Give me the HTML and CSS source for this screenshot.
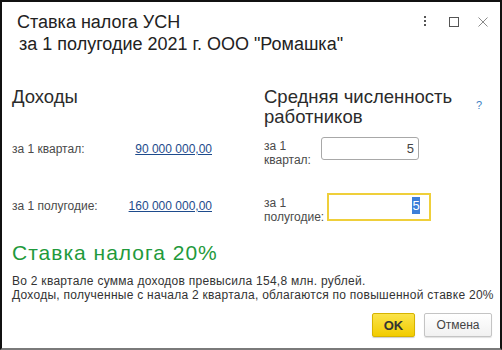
FILE: index.html
```html
<!DOCTYPE html>
<html lang="ru">
<head>
<meta charset="utf-8">
<title>Ставка налога УСН</title>
<link rel="stylesheet" href="styles.css">
</head>
<body>
<div class="window">
  <div class="header">
    <div class="title">
      <div class="title-line">Ставка налога УСН</div>
      <div class="title-line second">за 1 полугодие 2021 г. ООО "Ромашка"</div>
    </div>
    <svg class="win-icons" width="70" height="14" viewBox="0 0 70 14" aria-hidden="true">
      <rect x="4" y="2" width="2" height="2" fill="#555"/>
      <rect x="4" y="6" width="2" height="2" fill="#555"/>
      <rect x="4" y="10" width="2" height="2" fill="#555"/>
      <rect x="29.5" y="3.5" width="9" height="9" fill="none" stroke="#555" stroke-width="1"/>
      <path d="M58.5 3.5 L67.5 12.5 M67.5 3.5 L58.5 12.5" stroke="#8a8a8a" stroke-width="1" fill="none"/>
    </svg>
  </div>

  <div class="main">
    <div class="heading">Доходы</div>
    <div class="heading-right">
      <div class="heading">Средняя численность<br>работников</div>
      <span class="help">?</span>
    </div>

    <div class="income-row first">
      <span class="label">за 1 квартал:</span>
      <a class="link" href="#">90 000 000,00</a>
    </div>
    <div class="staff-row first">
      <span class="label two-line">за 1<br>квартал:</span>
      <div class="field">5</div>
    </div>

    <div class="income-row second">
      <span class="label">за 1 полугодие:</span>
      <a class="link" href="#">160 000 000,00</a>
    </div>
    <div class="staff-row second">
      <span class="label two-line">за 1<br>полугодие:</span>
      <div class="field focused"><span class="sel">5</span></div>
    </div>
  </div>

  <div class="rate">Ставка налога 20%</div>
  <div class="note">
    <div>Во 2 квартале сумма доходов превысила 154,8 млн. рублей.</div>
    <div>Доходы, полученные с начала 2 квартала, облагаются по повышенной ставке 20%</div>
  </div>

  <div class="buttons">
    <button class="btn ok">OK</button>
    <button class="btn cancel">Отмена</button>
  </div>
</div>
</body>
</html>
```
FILE: styles.css
```css
* { box-sizing: border-box; }
html, body { margin: 0; padding: 0; background: #fff; }
body { font-family: "Liberation Sans", Arial, sans-serif; color: #333; }

.window {
  width: 502px;
  height: 350px;
  border: 2px solid #111;
  border-bottom-color: #7a7a7a;
  background: #fff;
  overflow: hidden;
}

.header {
  display: flex;
  align-items: flex-start;
  padding: 9px 10px 0 15px;
}
.title { font-size: 18px; line-height: 22px; color: #222; }
.title-line.second { padding-left: 2px; }
.win-icons { margin-left: auto; margin-top: 3px; flex: none; }

.main {
  display: grid;
  grid-template-columns: 252px 1fr;
  align-items: start;
  margin-top: 32px;
  padding-left: 10px;
}
.heading { font-size: 18.5px; line-height: 20px; color: #2b2b2b; }
.heading-right { display: flex; justify-content: space-between; padding-right: 18px; }
.help { font-size: 11px; line-height: 13px; margin-top: 12px; color: #3f7fc4; }

.label { font-size: 12px; color: #4a4a4a; }
.income-row {
  display: flex;
  justify-content: space-between;
  width: 200px;
  font-size: 12px;
  line-height: 16px;
}
.income-row.first { margin-top: 14px; }
.income-row.second { margin-top: 31px; }
.link { color: #1e4b8c; text-decoration: underline; }

.staff-row { display: flex; align-items: flex-start; }
.staff-row.first { margin-top: 10px; }
.staff-row.second { margin-top: 26px; }
.label.two-line { line-height: 14px; margin-top: 2px; }
.staff-row.second .label.two-line { margin-top: 3px; }

.field {
  width: 98px;
  height: 23px;
  margin-left: 10px;
  border: 1px solid #a8a8a8;
  border-radius: 3px;
  font-size: 13px;
  line-height: 21px;
  text-align: right;
  padding-right: 4px;
  color: #444;
}
.field.focused {
  width: 104px;
  height: 28px;
  margin-left: 3px;
  border: 2px solid #efcf3a;
  border-radius: 0;
  line-height: 22px;
  padding-right: 9px;
}
.sel { background: #3d7fd9; color: #fff; padding: 1px 0.5px; }

.rate {
  margin-top: 16px;
  padding-left: 10px;
  font-size: 21px;
  line-height: 26px;
  letter-spacing: 1px;
  color: #1f9a3c;
}
.note {
  margin-top: 8px;
  padding-left: 10px;
  font-size: 12px;
  line-height: 14px;
  color: #333;
  letter-spacing: 0.27px;
}

.buttons {
  display: flex;
  justify-content: flex-end;
  gap: 9px;
  margin-top: 11px;
  padding-right: 8px;
}
.btn {
  height: 24px;
  font-family: "Liberation Sans", Arial, sans-serif;
  font-size: 12px;
  border-radius: 2px;
  padding: 0;
  cursor: pointer;
}
.btn.ok {
  width: 43px;
  font-weight: bold;
  font-size: 13px;
  color: #333;
  background: linear-gradient(#fbe34a, #f2cc00);
  border: 1px solid #d6b300;
  box-shadow: 0 1px 1px rgba(0,0,0,0.2);
}
.btn.cancel {
  width: 68px;
  color: #444;
  background: linear-gradient(#ffffff, #f1f1f1);
  border: 1px solid #c4c4c4;
  box-shadow: 0 1px 1px rgba(0,0,0,0.12);
}
```
